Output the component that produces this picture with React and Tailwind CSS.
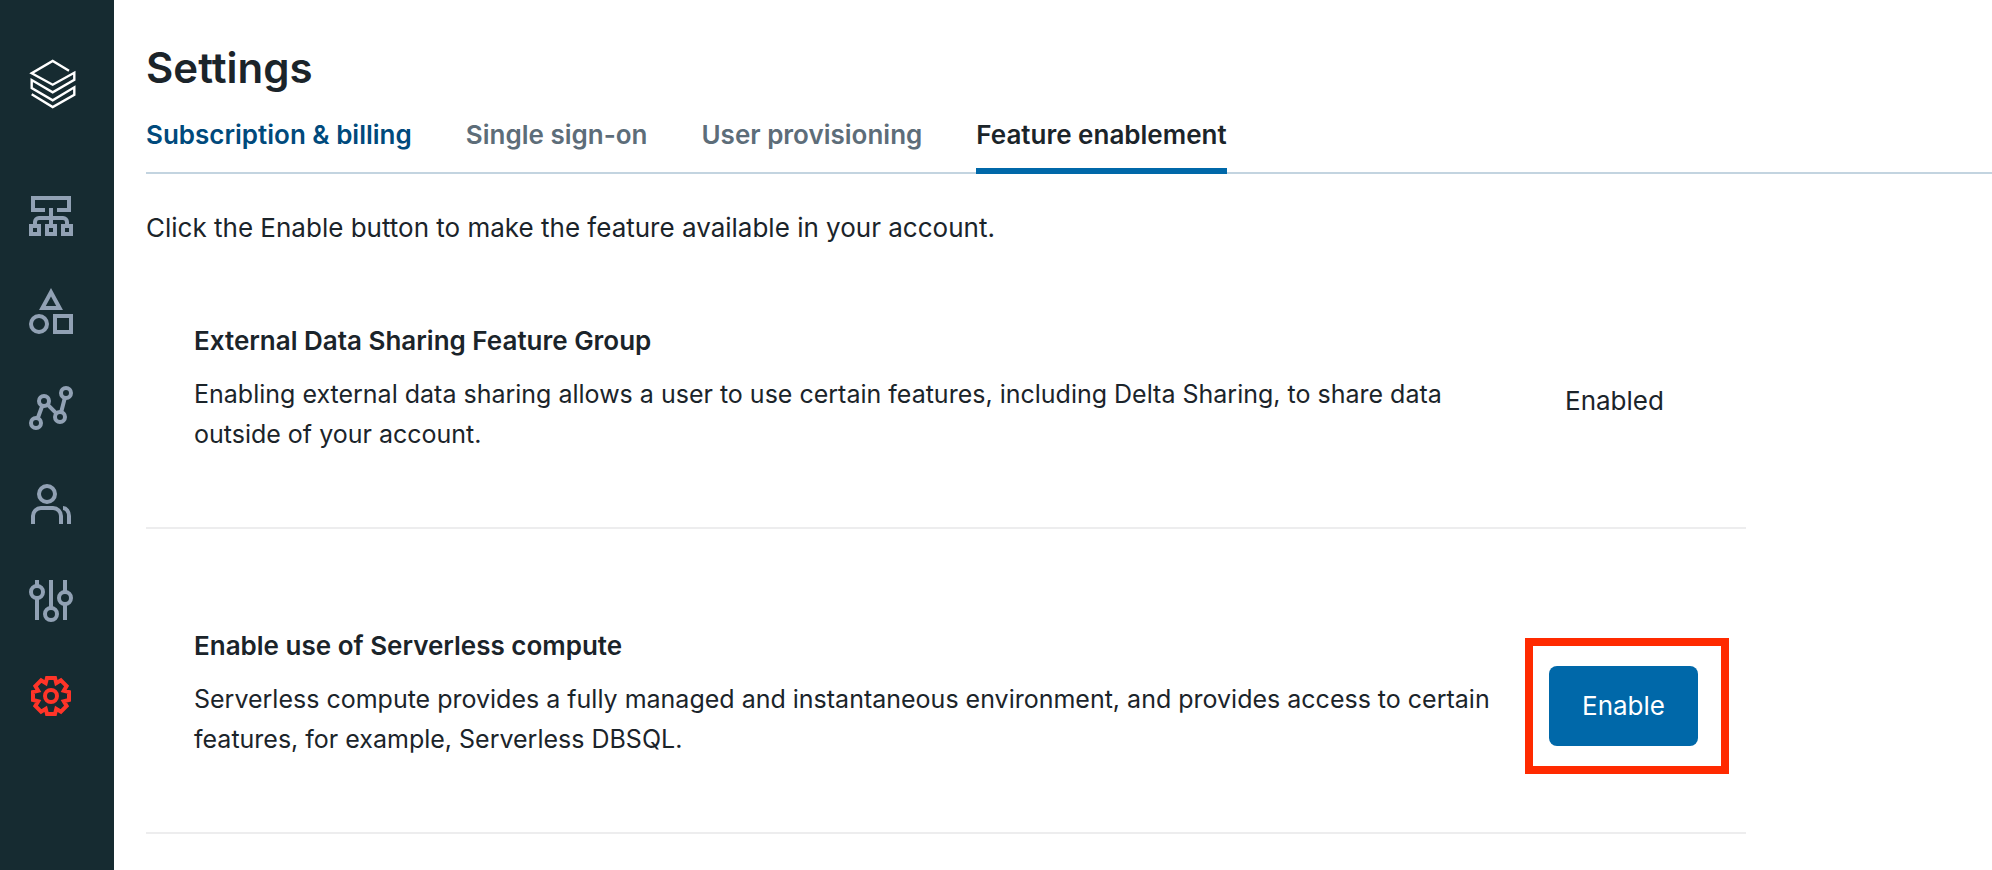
const tabs = [
  { label: 'Subscription & billing', style: 'text-[#004a7c]' },
  { label: 'Single sign-on', style: 'text-[#5d6d79]' },
  { label: 'User provisioning', style: 'text-[#5d6d79]' },
  { label: 'Feature enablement', style: 'text-[#1b242a]', active: true },
];

function Icon({ children, strokeWidth = 4 }) {
  return (
    <svg
      viewBox="0 0 48 48"
      className="block size-12 overflow-visible"
      fill="none"
      stroke="currentColor"
      strokeWidth={strokeWidth}
      aria-hidden="true"
    >
      {children}
    </svg>
  );
}

const navItems = [
  {
    label: 'Workspaces',
    icon: (
      <>
        <path d="M18 18H6V6H42V18H30M24 16V34M8 33V30A4 4 0 0 1 12 26H36A4 4 0 0 1 40 30V33" />
        <path d="M4 34H12V42H4ZM20 34H28V42H20ZM36 34H44V42H36Z" />
      </>
    ),
  },
  {
    label: 'Data',
    icon: (
      <>
        <path d="M24 4.2L15.4 20H32.6Z" />
        <circle cx="12" cy="36" r="8" />
        <path d="M28 28H44V44H28Z" />
      </>
    ),
  },
  {
    label: 'Usage',
    icon: (
      <>
        <circle cx="9" cy="39" r="5" />
        <circle cx="17" cy="17" r="5" />
        <circle cx="33" cy="33" r="5" />
        <circle cx="39" cy="9" r="5" />
        <path d="M10.8 34L15.2 22M20.6 20.6L29.4 29.4M34.2 28L37.8 14" />
      </>
    ),
  },
  {
    label: 'User management',
    icon: (
      <>
        <circle cx="20" cy="14" r="8" />
        <path d="M6 44V36A8 8 0 0 1 14 28H26A8 8 0 0 1 34 36V44M36 28A6 8 0 0 1 42 36V44" />
      </>
    ),
  },
  {
    label: 'Preferences',
    icon: (
      <>
        <circle cx="10" cy="16" r="6" />
        <circle cx="24" cy="38" r="6" />
        <circle cx="38" cy="22" r="6" />
        <path d="M10 4V10M10 22V44M24 4V32M38 4V16M38 28V44" />
      </>
    ),
  },
  {
    label: 'Settings',
    active: true,
    icon: (
      <>
        <circle cx="24" cy="24" r="6" />
        <path d="M20 6H28L29.3 11.2L33.9 8.4L39.6 14.1L36.8 18.7L42 20V28L36.8 29.3L39.6 33.9L33.9 39.6L29.3 36.8L28 42H20L18.7 36.8L14.1 39.6L8.4 33.9L11.2 29.3L6 28V20L11.2 18.7L8.4 14.1L14.1 8.4L18.7 11.2Z" />
      </>
    ),
  },
];

function Sidebar() {
  return (
    <aside className="w-[114px] shrink-0 bg-[#162b31] pt-15 pl-[27px]">
      <a href="#home" aria-label="Home" className="block w-12 text-white">
        <Icon strokeWidth={2.4}>
          <path d="M42 10.7L25.7 1L4.7 13.3L25.7 24.7L47.3 12.7V19.7L25.7 32.3L4.7 20V28L25.7 40.3L47.3 27.3V34.7L25.7 47L4.7 34.3" />
        </Icon>
      </a>
      <nav aria-label="Account" className="mt-21 flex w-12 flex-col gap-12">
        {navItems.map(({ label, icon, active }) => (
          <a
            key={label}
            href="#nav"
            aria-label={label}
            aria-current={active ? 'page' : undefined}
            className={active ? 'text-[#ff3428]' : 'text-[#91a1b4]'}
          >
            <Icon>{icon}</Icon>
          </a>
        ))}
      </nav>
    </aside>
  );
}

function Feature({ title, description, children }) {
  return (
    <section className="flex items-center border-b-2 border-[#ededee] py-[73px] pl-12">
      <div className="min-w-0 flex-1">
        <h2 className="mb-[13px] font-semibold">{title}</h2>
        <p className="text-[25px] leading-10">{description}</p>
      </div>
      <div className="w-[230px] shrink-0 pt-[27px] pl-[33px]">{children}</div>
    </section>
  );
}

export default function App() {
  return (
    <div className="flex min-h-screen bg-white font-['Inter','Liberation_Sans',sans-serif] text-[26px] leading-10 text-[#1b242a]">
      <Sidebar />
      <main className="min-w-0 flex-1 pt-10 pl-8">
        <h1 className="text-[42px] leading-14 font-semibold">Settings</h1>
        <nav aria-label="Settings sections" className="mt-[19px] flex gap-[54px] border-b-2 border-[#c3d4e0]">
          {tabs.map(({ label, style, active }) => (
            <a
              key={label}
              href="#tab"
              aria-current={active ? 'page' : undefined}
              className={`-mb-0.5 border-b-6 pb-[13px] font-semibold whitespace-nowrap ${style} ${active ? 'border-[#0068a9]' : 'border-transparent'}`}
            >
              {label}
            </a>
          ))}
        </nav>
        <p className="mt-[34px]">Click the Enable button to make the feature available in your account.</p>
        <div className="flex max-w-[1600px] flex-col gap-6">
          <Feature
            title="External Data Sharing Feature Group"
            description="Enabling external data sharing allows a user to use certain features, including Delta Sharing, to share data outside of your account."
          >
            <span className="block pl-4">Enabled</span>
          </Feature>
          <Feature
            title="Enable use of Serverless compute"
            description="Serverless compute provides a fully managed and instantaneous environment, and provides access to certain features, for example, Serverless DBSQL."
          >
            <div className="relative w-[149px]">
              <button type="button" className="block h-20 w-full rounded-lg bg-[#0068a9] text-white">
                Enable
              </button>
              <div className="pointer-events-none absolute -top-7 -right-[31px] -bottom-7 -left-6 border-8 border-[#ff2a00]" />
            </div>
          </Feature>
        </div>
      </main>
    </div>
  );
}
